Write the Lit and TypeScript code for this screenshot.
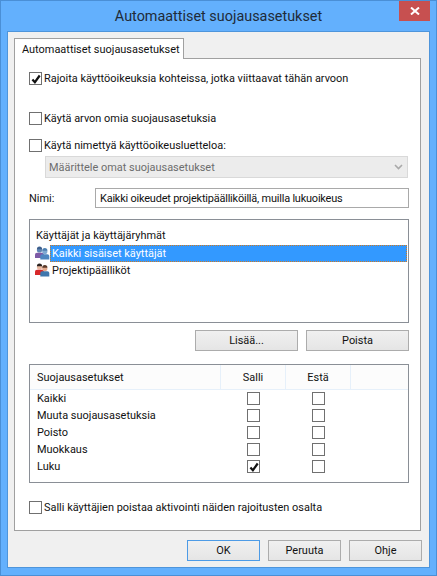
import { LitElement, html, css, svg } from "lit";
import { customElement } from "lit/decorators.js";

const CHECK = svg`<path d="M1.4 5.4 L3.9 8.2 L8.7 1.5" fill="none" stroke="#111" stroke-width="2.2"/>`;

function box(checked: boolean) {
  return html`<span class="box">${checked
    ? html`<svg width="10" height="10" viewBox="0 0 10 10">${CHECK}</svg>`
    : ""}</span>`;
}

function person(x: number, y: number, skin: string, hair: string, body: string) {
  return svg`<circle cx="${x}" cy="${y}" r="2.6" fill="${skin}"/><path d="M${x - 2.6} ${y - 0.8}a2.6 2.6 0 0 1 5.2 0z" fill="${hair}"/><path d="M${x - 4.5} ${y + 8}v-3.4q0-1.8 2-1.9h5q2 .1 2 1.9v3.4z" fill="${body}"/>`;
}

const ICON_A = html`<svg class="ico" width="16" height="16" viewBox="0 0 16 16">${person(5.5, 4, "#5f86b4", "#3d5f8d", "#7d5aa6")}${person(10.8, 5.5, "#7fa9d2", "#4c7fb0", "#4d86c0")}</svg>`;
const ICON_B = html`<svg class="ico" width="16" height="16" viewBox="0 0 16 16">${person(5.5, 4, "#e8b9a0", "#2b2320", "#d8282a")}${person(10.8, 5.5, "#e2a98c", "#5a3a2a", "#3f77ad")}</svg>`;

const PERMS: [string, boolean][] = [
  ["Kaikki", false],
  ["Muuta suojausasetuksia", false],
  ["Poisto", false],
  ["Muokkaus", false],
  ["Luku", true],
];

@customElement("app-root")
export class AppRoot extends LitElement {
  static styles = css`
    :host {
      display: block;
      width: 437px;
      height: 576px;
      box-sizing: border-box;
      background: #63b0fd;
      border: 1px solid #4a8fd6;
      font-family: "Roboto", "Open Sans", sans-serif;
      font-size: 10.95px;
      color: #111;
      overflow: hidden;
    }
    .title {
      height: 30px;
      display: flex;
      position: relative;
      align-items: center;
      justify-content: center;
      font-size: 14.4px;
      color: #1f2b38;
      padding-top: 1px;
      box-sizing: border-box;
    }
    .close {
      position: absolute;
      right: 6px;
      top: 0;
      width: 31px;
      height: 20px;
      background: #c75050;
      display: flex;
      align-items: center;
      justify-content: center;
    }
    .client {
      margin: 0 6px;
      height: 537px;
      box-sizing: border-box;
      background: #f0f0f0;
      border: 1px solid #4e95db;
      padding: 6px 8px 0 6px;
      display: flex;
      flex-direction: column;
    }
    .tab {
      align-self: flex-start;
      height: 21px;
      width: 170px;
      box-sizing: border-box;
      background: #fff;
      border: 1px solid #a0a0a0;
      border-bottom: none;
      display: flex;
      align-items: center;
      padding-left: 7px;
      margin-bottom: -1px;
      position: relative;
      z-index: 1;
      white-space: nowrap;
    }
    .panel {
      height: 473px;
      box-sizing: border-box;
      background: #fff;
      border: 1px solid #a0a0a0;
      padding: 13px 11px 0 14px;
      display: flex;
      flex-direction: column;
    }
    .chk {
      display: flex;
      align-items: center;
      gap: 2px;
      height: 13px;
      white-space: nowrap;
    }
    .box {
      width: 13px;
      height: 13px;
      box-sizing: border-box;
      border: 1px solid #707070;
      background: #fff;
      display: inline-flex;
      align-items: center;
      justify-content: center;
      flex: none;
    }
    .c2 { margin-top: 27px; }
    .c3 { margin-top: 14px; }
    .select {
      margin: 4px 1px 0 16px;
      height: 22px;
      box-sizing: border-box;
      background: #ececec;
      border: 1px solid #d9d9d9;
      color: #6d6d6d;
      display: flex;
      align-items: center;
      justify-content: space-between;
      padding: 0 4px 0 3px;
    }
    .name {
      margin-top: 10px;
      display: flex;
      align-items: center;
    }
    .name label { width: 66px; }
    .input {
      flex: 1;
      height: 20px;
      box-sizing: border-box;
      background: #fff;
      border: 1px solid #a9a9a9;
      display: flex;
      align-items: center;
      padding-left: 4px;
      letter-spacing: -0.2px;
    }
    .list {
      margin-top: 11px;
      height: 104px;
      box-sizing: border-box;
      border: 1px solid #8a8f96;
      padding: 5px 1px 0 4px;
    }
    .list .hd { height: 20px; padding-left: 2px; display: flex; align-items: center; }
    .row {
      display: flex;
      align-items: center;
      height: 17px;
    }
    .ico { flex: none; }
    .row .lbl { flex: 1; height: 17px; display: flex; align-items: center; padding-left: 2px; }
    .row.sel .lbl {
      color: #fff;
      background:
        repeating-linear-gradient(90deg, #d07a20 0 1px, #3399ff 1px 2px) top / 100% 1px no-repeat,
        repeating-linear-gradient(90deg, #d07a20 0 1px, #3399ff 1px 2px) bottom / 100% 1px no-repeat,
        repeating-linear-gradient(0deg, #d07a20 0 1px, #3399ff 1px 2px) left / 1px 100% no-repeat,
        repeating-linear-gradient(0deg, #d07a20 0 1px, #3399ff 1px 2px) right / 1px 100% no-repeat,
        #3399ff;
    }
    .btns {
      margin-top: 7px;
      display: flex;
      justify-content: flex-end;
      gap: 8px;
    }
    .btn {
      height: 21px;
      box-sizing: border-box;
      border: 1px solid #acacac;
      background: linear-gradient(#f0f0f0, #e5e5e5);
      display: flex;
      align-items: center;
      justify-content: center;
    }
    .btns .btn { width: 103px; }
    .perm {
      margin-top: 13px;
      height: 119px;
      box-sizing: border-box;
      border: 1px solid #8a8f96;
      display: flex;
      flex-direction: column;
    }
    .ph, .pr {
      display: grid;
      grid-template-columns: 191px 65px 65px 1fr;
    }
    .ph {
      height: 24px;
      background: #fcfcfc;
      border-bottom: 1px solid #e6f0fa;
    }
    .ph > div {
      display: flex;
      align-items: center;
      justify-content: center;
      border-right: 1px solid #e6f0fa;
    }
    .ph > div:first-child { justify-content: flex-start; padding-left: 7px; }
    .ph > div:last-child { border-right: none; }
    .pr { height: 17px; align-items: center; }
    .pr > div:first-child { padding-left: 7px; white-space: nowrap; }
    .pr > .c { display: flex; justify-content: center; }
    .c4 { margin-top: 18px; }
    .foot {
      margin: 9px -1px 0 0;
      display: flex;
      justify-content: flex-end;
      gap: 8px;
    }
    .foot .btn { width: 73px; height: 21px; }
    .foot .def { border-color: #4d9be6; }
  `;

  render() {
    return html`
      <div class="title">
        Automaattiset suojausasetukset
        <div class="close">
          <svg width="10" height="8" viewBox="0 0 10 8"><path d="M1 .5 L9 7.5 M9 .5 L1 7.5" stroke="#fff" stroke-width="2"/></svg>
        </div>
      </div>
      <div class="client">
        <div class="tab">Automaattiset suojausasetukset</div>
        <div class="panel">
          <div class="chk">${box(true)}<span>Rajoita käyttöoikeuksia kohteissa, jotka viittaavat tähän arvoon</span></div>
          <div class="chk c2">${box(false)}<span>Käytä arvon omia suojausasetuksia</span></div>
          <div class="chk c3">${box(false)}<span>Käytä nimettyä käyttöoikeusluetteloa:</span></div>
          <div class="select">
            <span>Määrittele omat suojausasetukset</span>
            <svg width="9" height="6" viewBox="0 0 9 6"><path d="M1 1 L4.5 4.5 L8 1" fill="none" stroke="#a9a9a9" stroke-width="1.6"/></svg>
          </div>
          <div class="name">
            <label>Nimi:</label>
            <div class="input">Kaikki oikeudet projektipäälliköillä, muilla lukuoikeus</div>
          </div>
          <div class="list">
            <div class="hd">Käyttäjät ja käyttäjäryhmät</div>
            <div class="row sel">${ICON_A}<span class="lbl">Kaikki sisäiset käyttäjät</span></div>
            <div class="row">${ICON_B}<span class="lbl">Projektipäälliköt</span></div>
          </div>
          <div class="btns">
            <div class="btn">Lisää...</div>
            <div class="btn">Poista</div>
          </div>
          <div class="perm">
            <div class="ph"><div>Suojausasetukset</div><div>Salli</div><div>Estä</div><div></div></div>
            ${PERMS.map(
              ([n, s]) => html`<div class="pr"><div>${n}</div><div class="c">${box(s)}</div><div class="c">${box(false)}</div><div></div></div>`
            )}
          </div>
          <div class="chk c4">${box(false)}<span>Salli käyttäjien poistaa aktivointi näiden rajoitusten osalta</span></div>
        </div>
        <div class="foot">
          <div class="btn def">OK</div>
          <div class="btn">Peruuta</div>
          <div class="btn">Ohje</div>
        </div>
      </div>
    `;
  }
}
